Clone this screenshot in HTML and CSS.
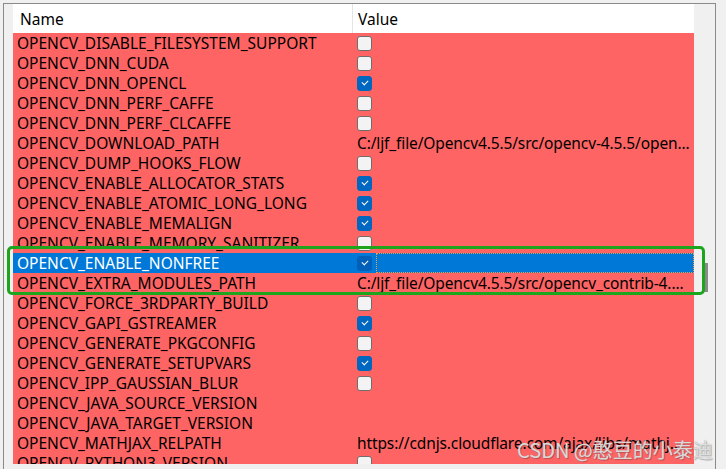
FILE: index.html
```html
<!DOCTYPE html>
<html lang="en">
<head>
  <meta charset="UTF-8" />
  <title>CMake cache — OpenCV</title>
  <link rel="stylesheet" href="styles.css">
</head>
<body>

  <div class="frame">
    <div class="gutter-left"></div>

    <div class="table">
      <div class="head">
        <div class="col-name">Name</div>
        <div class="col-value">Value</div>
      </div>

      <div class="row"><div class="col-name">OPENCV_DISABLE_FILESYSTEM_SUPPORT</div><div class="col-value"><span class="check"></span></div></div>
      <div class="row"><div class="col-name">OPENCV_DNN_CUDA</div><div class="col-value"><span class="check"></span></div></div>
      <div class="row"><div class="col-name">OPENCV_DNN_OPENCL</div><div class="col-value"><span class="check on"></span></div></div>
      <div class="row"><div class="col-name">OPENCV_DNN_PERF_CAFFE</div><div class="col-value"><span class="check"></span></div></div>
      <div class="row"><div class="col-name">OPENCV_DNN_PERF_CLCAFFE</div><div class="col-value"><span class="check"></span></div></div>
      <div class="row"><div class="col-name">OPENCV_DOWNLOAD_PATH</div><div class="col-value"><span class="path">C:/ljf_file/Opencv4.5.5/src/opencv-4.5.5/open...</span></div></div>
      <div class="row"><div class="col-name">OPENCV_DUMP_HOOKS_FLOW</div><div class="col-value"><span class="check"></span></div></div>
      <div class="row"><div class="col-name">OPENCV_ENABLE_ALLOCATOR_STATS</div><div class="col-value"><span class="check on"></span></div></div>
      <div class="row"><div class="col-name">OPENCV_ENABLE_ATOMIC_LONG_LONG</div><div class="col-value"><span class="check on"></span></div></div>
      <div class="row"><div class="col-name">OPENCV_ENABLE_MEMALIGN</div><div class="col-value"><span class="check on"></span></div></div>
      <div class="row"><div class="col-name">OPENCV_ENABLE_MEMORY_SANITIZER</div><div class="col-value"><span class="check"></span></div></div>
      <div class="row selected"><div class="col-name">OPENCV_ENABLE_NONFREE</div><div class="col-value"><span class="check on"></span><span class="focus"></span></div></div>
      <div class="row"><div class="col-name">OPENCV_EXTRA_MODULES_PATH</div><div class="col-value"><span class="path">C:/ljf_file/Opencv4.5.5/src/opencv_contrib-4....</span></div></div>
      <div class="row"><div class="col-name">OPENCV_FORCE_3RDPARTY_BUILD</div><div class="col-value"><span class="check"></span></div></div>
      <div class="row"><div class="col-name">OPENCV_GAPI_GSTREAMER</div><div class="col-value"><span class="check on"></span></div></div>
      <div class="row"><div class="col-name">OPENCV_GENERATE_PKGCONFIG</div><div class="col-value"><span class="check"></span></div></div>
      <div class="row"><div class="col-name">OPENCV_GENERATE_SETUPVARS</div><div class="col-value"><span class="check on"></span></div></div>
      <div class="row"><div class="col-name">OPENCV_IPP_GAUSSIAN_BLUR</div><div class="col-value"><span class="check"></span></div></div>
      <div class="row"><div class="col-name">OPENCV_JAVA_SOURCE_VERSION</div><div class="col-value"></div></div>
      <div class="row"><div class="col-name">OPENCV_JAVA_TARGET_VERSION</div><div class="col-value"></div></div>
      <div class="row"><div class="col-name">OPENCV_MATHJAX_RELPATH</div><div class="col-value"><span class="path">https://cdnjs.cloudflare.com/ajax/libs/mathj...</span></div></div>
      <div class="row"><div class="col-name">OPENCV_PYTHON3_VERSION</div><div class="col-value"><span class="check"></span></div></div>
    </div>

    <div class="gutter-right">
      <div class="thumb"></div>
    </div>
  </div>

  <!-- рамка-виділення поверх таблиці -->
  <div class="mark"></div>

  <div class="watermark">CSDN @憨豆的小泰迪</div>

</body>
</html>
```

FILE: styles.css
```css
body {
  margin: 0;
  width: 726px;
  height: 469px;
  overflow: hidden;
  background-color: #f0f0f0;
  font-family: 'Noto Sans', 'Open Sans', sans-serif;
  font-size: 15.5px;
  color: #000;
  position: relative;
}

.frame {
  margin: 3px 0 0 3px;
  width: 711px;
  height: 470px;
  border: 1px solid #8a8a8a;
  border-bottom: none;
  display: flex;
  overflow: hidden;
}

.gutter-left {
  width: 9px;
  flex-shrink: 0;
}

.table {
  width: 681px;
  flex-shrink: 0;
  display: flex;
  flex-direction: column;
  height: 460px;
  overflow: hidden;
}

.head {
  display: flex;
  height: 29px;
  background-color: #fff;
  flex-shrink: 0;
}

.head .col-name {
  width: 332px;
  padding-left: 7px;
  border-right: 1px solid #e5e5e5;
}

.head .col-value {
  padding-left: 5px;
}

.head > div {
  display: flex;
  align-items: center;
}

.row {
  display: flex;
  height: 20px;
  flex-shrink: 0;
  background-color: #ff6464;
  align-items: center;
  white-space: nowrap;
}

.col-name {
  width: 336px;
  padding-left: 4px;
  flex-shrink: 0;
  overflow: hidden;
}

.col-value {
  flex-grow: 1;
  padding-left: 4px;
  display: flex;
  align-items: center;
  height: 100%;
  position: relative;
  overflow: hidden;
}

.path {
  overflow: hidden;
  text-overflow: ellipsis;
  letter-spacing: -0.12px;
}

.check {
  width: 13px;
  height: 13px;
  border: 1px solid #6e6e6e;
  border-radius: 3px;
  background-color: #f3f3f3;
  position: relative;
}

.check.on {
  background-color: #0067c0;
  border-color: #0067c0;
}

.check.on::after {
  content: '';
  position: absolute;
  left: 4px;
  top: 3px;
  width: 5px;
  height: 3px;
  border-left: 1px solid #fff;
  border-bottom: 1px solid #fff;
  transform: rotate(-45deg);
}

.row.selected {
  background-color: #0078d7;
  color: #fff;
}

.row.selected .check.on {
  background-color: #005fb8;
  border-color: #005fb8;
}

.focus {
  flex-grow: 1;
  align-self: stretch;
  margin-left: 4px;
  border: 1px dotted #f0a040;
}

.gutter-right {
  width: 21px;
  flex-shrink: 0;
}

.thumb {
  width: 4px;
  height: 29px;
  margin: 259px 0 0 10px;
  background-color: #8a8a8a;
}

.mark {
  position: absolute;
  left: 7px;
  top: 246px;
  width: 692px;
  height: 43px;
  border: 3px solid #1ea51e;
  border-radius: 5px;
}

.watermark {
  position: absolute;
  left: 517px;
  top: 435px;
  font-family: 'Noto Sans CJK SC', sans-serif;
  font-size: 20px;
  color: rgba(255, 255, 255, 0.7);
  text-shadow: 0 0 1px #8a8a8a, 1px 1px 1px rgba(0, 0, 0, 0.25);
  white-space: nowrap;
}
```
